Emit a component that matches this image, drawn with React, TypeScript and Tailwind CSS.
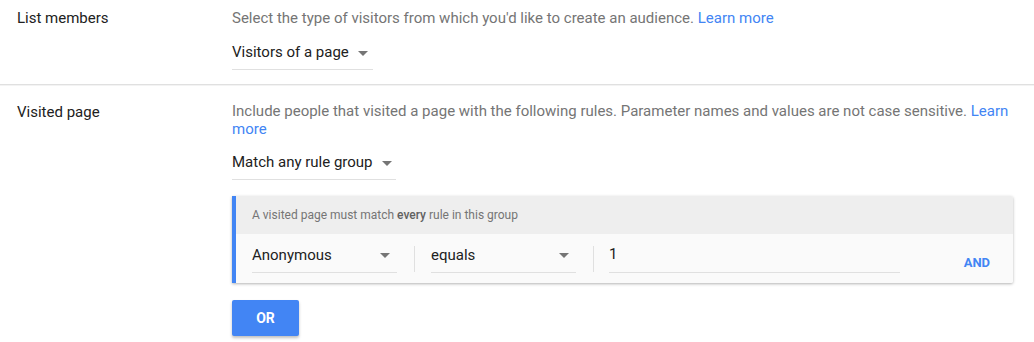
import { useState } from "react";

const Caret = () => (
  <span className="inline-block w-0 h-0 border-x-[5px] border-t-[5px] border-x-transparent border-t-[#757575]" />
);

const Dropdown = ({ label, className = "" }: { label: string; className?: string }) => (
  <div className={`flex items-center border-b border-[#e0e0e0] pt-[2px] pb-[7px] leading-5 text-[15px] text-[#212121] cursor-pointer ${className}`}>
    <span>{label}</span>
    <span className="ml-[9px] mt-[2px] flex items-center">
      <Caret />
    </span>
  </div>
);

const RuleSelect = ({ label }: { label: string }) => (
  <div className="flex w-[145px] items-center justify-between border-b border-[#e0e0e0] pb-[7px] leading-5 text-[15px] text-[#212121] cursor-pointer">
    <span>{label}</span>
    <span className="mr-[7px] mt-[2px] flex items-center">
      <Caret />
    </span>
  </div>
);

const App = () => {
  const [value, setValue] = useState("1");

  return (
    <div className="w-[1034px] h-[342px] bg-white font-['Roboto',sans-serif] text-[15px]">
      {/* List members */}
      <div className="flex pt-[8px] pb-[14px]">
        <div className="w-[232px] pl-[17px] leading-5 text-[#212121]">List members</div>
        <div className="flex-1 pr-[21px]">
          <p className="leading-5 text-[#757575]">
            Select the type of visitors from which you'd like to create an audience.{" "}
            <a href="#" className="text-[#4285f4]">Learn more</a>
          </p>
          <Dropdown label="Visitors of a page" className="mt-[12px] w-[141px]" />
        </div>
      </div>

      <div className="h-px bg-[#e0e0e0]" />
      <div className="h-px bg-[#f3f3f3]" />

      {/* Visited page */}
      <div className="flex pt-[16px]">
        <div className="w-[232px] pl-[17px] leading-5 text-[#212121]">Visited page</div>
        <div className="flex-1 pr-[21px]">
          <p className="leading-[18px] text-[#757575]">
            Include people that visited a page with the following rules. Parameter names and values are not case sensitive.{" "}
            <a href="#" className="text-[#4285f4]">Learn more</a>
          </p>
          <Dropdown label="Match any rule group" className="mt-[12px] w-[164px]" />

          {/* Rule group card */}
          <div className="mt-[16px] border-l-4 border-[#4285f4] rounded-r-[2px] shadow-[0_1px_3px_rgba(0,0,0,0.3)] overflow-hidden">
            <div className="h-[38px] flex items-center pl-4 bg-[#eeeeee] text-[12px] text-[#757575]">
              <span>
                A visited page must match <span className="font-medium text-[#616161]">every</span> rule in this group
              </span>
            </div>
            <div className="flex items-center bg-[#fafafa] pl-4 pr-[23px] pt-[10px] pb-[10px]">
              <RuleSelect label="Anonymous" />
              <div className="w-px h-[26px] bg-[#e0e0e0] ml-[17px] mr-[16px]" />
              <RuleSelect label="equals" />
              <div className="w-px h-[26px] bg-[#e0e0e0] ml-[17px] mr-[15px]" />
              <input
                value={value}
                onChange={(e) => setValue(e.target.value)}
                className="w-[291px] border-b border-[#e0e0e0] pb-[8px] leading-5 text-[15px] text-[#212121] bg-transparent outline-none"
              />
              <div className="flex-1" />
              <button className="text-[13px] font-bold text-[#4285f4] mt-[8px]">AND</button>
            </div>
          </div>

          <button className="mt-[17px] w-[67px] h-[36px] rounded-[2px] bg-[#4285f4] text-white text-[14px] font-bold shadow-[0_2px_3px_rgba(0,0,0,0.25)]">
            OR
          </button>
        </div>
      </div>
    </div>
  );
};

export default App;
